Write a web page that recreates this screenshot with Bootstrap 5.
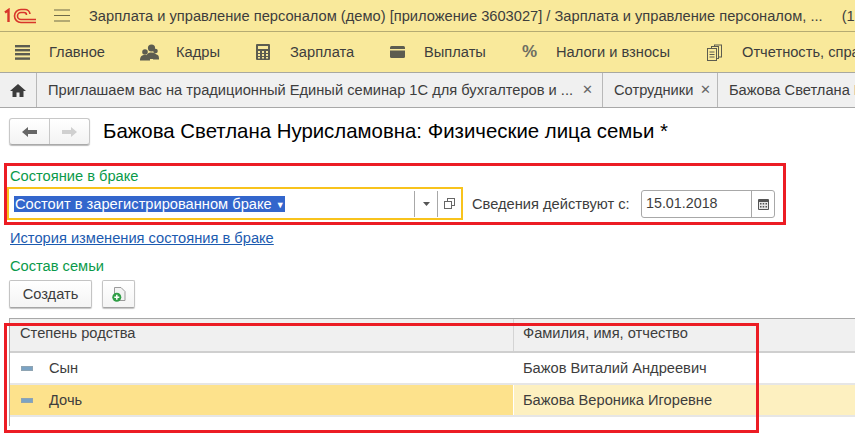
<!DOCTYPE html>
<html lang="en">
<head>
    <meta charset="UTF-8">
    <meta name="viewport" content="width=device-width, initial-scale=1.0">
    <title>Физические лица семьи</title>
    <link href="https://cdn.jsdelivr.net/npm/bootstrap@5.3.0/dist/css/bootstrap.min.css" rel="stylesheet">
    <style>
        html, body { height: 436px; overflow: hidden; }
        body { font-family: "Liberation Sans", Arial, sans-serif; font-size: 14.67px; color: #3d3d3d; background: #fff; position: relative; }
        .title-bar { height: 32px; background: #f9e99b; border-bottom: 1px solid #b5ab73; white-space: nowrap; overflow: hidden; padding-left: 4px; }
        .burger-thin { width: 16px; height: 13px; margin: 0 19px 0 17px; flex: none; }
        .sections-bar { height: 41px; background: #f9e99b; border-bottom: 1px solid #a8a8a0; white-space: nowrap; overflow: hidden; }
        .section-item { flex: none; }
        .section-item svg { display: block; flex: none; }
        .tabs-bar { height: 35px; background: #f0f0f0; border-bottom: 1px solid #a8a8a8; white-space: nowrap; overflow: hidden; }
        .tab-home { width: 37px; flex: none; border-right: 1px solid #b8b8b8; }
        .tab-cell { flex: none; border-right: 1px solid #b8b8b8; padding-left: 11px; }
        .tab-close { color: #666; font-size: 13px; }
        .nav-pair { width: 81px; height: 27px; margin-left: 9px; border: 1px solid #c8c8c8; border-bottom-color: #aaa; border-radius: 3px; background: linear-gradient(#fff, #f3f3f3); box-shadow: 0 1px 1px #bbb; flex: none; }
        .nav-pair > div { height: 100%; flex: 1; }
        .nav-pair > div + div { border-left: 1px solid #c8c8c8; }
        .page-title { font-size: 20.4px; color: #000; margin: 0 0 0 13px; font-weight: 400; line-height: 27px; }
        .head-row { padding-top: 10px; }
        .field-label { color: #0a9a4a; padding-left: 10px; line-height: 16px; }
        .marriage-row { margin-top: 3px; height: 33px; margin-left: 7px; }
        .combo-box { width: 456px; height: 33px; border: 2px solid #f8c31c; flex: none; padding: 0 1px 0 5px; }
        .combo-selected { background: #3366cc; color: #fff; line-height: 16px; height: 16px; width: 271px; white-space: nowrap; overflow: hidden; flex: none; padding-left: 1px; }
        .combo-arrow { font-size: 9px; vertical-align: 1px; }
        .combo-btn { width: 23px; height: 26px; border-left: 1px solid #a8a8a8; flex: none; }
        .date-label { margin-left: 9px; width: 169px; flex: none; }
        .date-box { width: 134px; height: 28px; border: 1px solid #a8a8a8; border-radius: 3px; flex: none; padding-left: 4px; font-size: 14.3px; }
        .date-btn { width: 23px; height: 100%; border-left: 1px solid #a8a8a8; }
        .history-link { display: block; color: #1c5bb0; padding-left: 10px; margin-top: 10px; line-height: 16px; }
        .family-label { margin-top: 12px; }
        .btn-row { margin: 6px 0 0 9px; height: 28px; }
        .one-btn { height: 28px; border: 1px solid #c4c4c4; border-bottom-color: #a5a5a5; border-radius: 2px; background: linear-gradient(#fff, #f4f4f4); box-shadow: 0 1px 1px #c4c4c4; flex: none; }
        .create-btn { width: 83px; color: #3d3d3d; }
        .add-btn { width: 33px; margin-left: 10px; }
        .kin-grid { margin: 10px 0 0 9px; height: 108px; border-left: 1px solid #a8a8a8; border-top: 1px solid #a8a8a8; }
        .kin-head { height: 34px; background: #f0f0f0; border-bottom: 2px solid #cfcfcf; }
        .kin-row { height: 32px; border-bottom: 2px solid #e6e6e6; }
        .col-kin { width: 503px; flex: none; padding-left: 10px; height: 100%; }
        .col-name { flex: 1; padding-left: 9px; height: 100%; border-left: 1px solid #d4d4d4; }
        .kin-head .col-kin, .kin-head .col-name { padding-bottom: 4px; }
        .kin-row .col-kin { padding-left: 11px; }
        .dash-mark { width: 12px; height: 5px; background: #7ba3c4; border: 1px solid #8fa4b2; margin-right: 16px; flex: none; }
        .row-current .col-kin { background: #fde28c; }
        .row-current .col-name { background: #fdf0c0; border-left: 1px solid #fff; }
        .red-frame { position: absolute; border: 3px solid #ec1c24; pointer-events: none; }
        .frame-top { left: 4px; top: 163px; width: 782px; height: 62px; }
        .frame-bottom { left: 4px; top: 323px; width: 755px; height: 110px; }
    </style>
</head>
<body>

    <div class="title-bar d-flex align-items-center">
        <svg width="33" height="16" viewBox="0 0 33 16" fill="none" stroke="#d8352a" class="flex-shrink-0">
            <path d="M1 4.500 L4.500 2 V14" stroke-width="2.400"/>
            <path d="M32 14.500 H17 A6.500 6.500 0 1 1 17 1.500 H21 A5 5 0 0 1 26 6" stroke-width="1.600"/>
            <path d="M32 11.500 H17 A3.500 3.500 0 1 1 17 4.500 H20 A2.500 2.500 0 0 1 22.500 7" stroke-width="1.600"/>
        </svg>
        <svg class="burger-thin" viewBox="0 0 16 13" stroke="#6f6a4a"><path d="M0 1H16M0 6.500H16M0 12H16" stroke-width="1.200"/></svg>
        <span>Зарплата и управление персоналом (демо) [приложение 3603027] / Зарплата и управление персоналом, ...</span>
        <span style="margin-left:19px">(1С:Предприятие)</span>
    </div>

    <div class="sections-bar d-flex align-items-center">
        <div class="section-item d-flex align-items-center" style="margin-left:15px;width:125px">
            <svg width="15" height="15" viewBox="0 0 15 15" fill="#5c5c50"><rect width="15" height="2.400" y="0"/><rect width="15" height="2.400" y="4"/><rect width="15" height="2.400" y="8"/><rect width="15" height="2.400" y="12.400"/></svg>
            <span style="margin-left:19px">Главное</span>
        </div>
        <div class="section-item d-flex align-items-center" style="width:116px">
            <svg width="19" height="17" viewBox="0 0 19 17" fill="#5c5c50"><circle cx="11.500" cy="4" r="3.600"/><path d="M6 15c0-5 2-6.500 5.500-6.500S17 10 17 13v2z"/><circle cx="5" cy="8" r="2.800"/><path d="M0 16.500c0-4 1.500-5.500 5-5.500s5 1.500 5 5.500z"/><circle cx="15.500" cy="7" r="2.300"/><path d="M13 15.500c0-3 1-5 3-5s3 1.500 3 4v1z"/></svg>
            <span style="margin-left:17px">Кадры</span>
        </div>
        <div class="section-item d-flex align-items-center" style="width:134px">
            <svg width="14" height="16" viewBox="0 0 14 16"><rect width="14" height="16" rx="1" fill="#5c5c50"/><rect x="2" y="2" width="10" height="3" fill="#f9e99b"/><g fill="#f9e99b"><rect x="2" y="7" width="2" height="2"/><rect x="6" y="7" width="2" height="2"/><rect x="10" y="7" width="2" height="2"/><rect x="2" y="10" width="2" height="2"/><rect x="6" y="10" width="2" height="2"/><rect x="10" y="10" width="2" height="2"/><rect x="2" y="13" width="2" height="1.500"/><rect x="6" y="13" width="2" height="1.500"/><rect x="10" y="13" width="2" height="1.500"/></g></svg>
            <span style="margin-left:20px">Зарплата</span>
        </div>
        <div class="section-item d-flex align-items-center" style="width:132px">
            <svg width="15" height="12" viewBox="0 0 15 12"><rect width="15" height="12" rx="1.500" fill="#5c5c50"/><rect x="0" y="3" width="15" height="1.500" fill="#f9e99b"/></svg>
            <span style="margin-left:19px">Выплаты</span>
        </div>
        <div class="section-item d-flex align-items-center" style="width:185px">
            <b style="font-size:17px;color:#6e6e62;width:17px">%</b>
            <span style="margin-left:17px">Налоги и взносы</span>
        </div>
        <div class="section-item d-flex align-items-center">
            <svg width="15" height="17" viewBox="0 0 15 17" fill="#f9e99b" stroke="#5c5c50"><rect x="7.500" y="1" width="7" height="12"/><rect x="4.500" y="2.500" width="7" height="12"/><rect x="0.500" y="4.500" width="9" height="12"/><path d="M2.500 8h5M2.500 10.500h5M2.500 13h5"/></svg>
            <span style="margin-left:20px">Отчетность, справки</span>
        </div>
    </div>

    <div class="tabs-bar d-flex">
        <div class="tab-home d-flex align-items-center justify-content-center">
            <svg width="16" height="13" viewBox="0 0 16 13" fill="#3c3c3c"><path d="M8 0 L16 7 H13.500 V13 H9.500 V8.500 H6.500 V13 H2.500 V7 H0 Z"/></svg>
        </div>
        <div class="tab-cell d-flex align-items-center" style="width:566px">
            <span>Приглашаем вас на традиционный Единый семинар 1С для бухгалтеров и ...</span>
            <span class="tab-close ms-auto" style="margin-right:9px">&#x2715;</span>
        </div>
        <div class="tab-cell d-flex align-items-center" style="width:115px">
            <span>Сотрудники</span>
            <span class="tab-close ms-auto" style="margin-right:6px">&#x2715;</span>
        </div>
        <div class="tab-cell d-flex align-items-center">
            <span>Бажова Светлана Нурисламовна</span>
        </div>
    </div>

    <div class="head-row d-flex align-items-center">
        <div class="nav-pair d-flex">
            <div class="d-flex align-items-center justify-content-center">
                <svg width="15" height="10" viewBox="0 0 15 10" fill="#666"><path d="M0 5 L6 0 V3 H15 V7 H6 V10 Z"/></svg>
            </div>
            <div class="d-flex align-items-center justify-content-center">
                <svg width="15" height="10" viewBox="0 0 15 10" fill="#d0d0d0"><path d="M15 5 L9 0 V3 H0 V7 H9 V10 Z"/></svg>
            </div>
        </div>
        <h1 class="page-title">Бажова Светлана Нурисламовна: Физические лица семьи *</h1>
    </div>

    <div class="field-label" style="margin-top:23px">Состояние в браке</div>

    <div class="marriage-row d-flex align-items-center">
        <div class="combo-box d-flex align-items-center">
            <div class="combo-selected">Состоит в зарегистрированном браке <span class="combo-arrow">&#9660;</span></div>
            <div class="combo-btn d-flex align-items-center justify-content-center ms-auto">
                <svg width="7" height="4" viewBox="0 0 7 4" fill="#555"><path d="M0 0H7L3.500 4Z"/></svg>
            </div>
            <div class="combo-btn d-flex align-items-center justify-content-center">
                <svg width="11" height="11" viewBox="0 0 11 11" fill="#fff" stroke="#666"><rect x="3.500" y="0.500" width="7" height="7"/><rect x="0.500" y="3.500" width="7" height="7"/></svg>
            </div>
        </div>
        <div class="date-label">Сведения действуют с:</div>
        <div class="date-box d-flex align-items-center justify-content-between">
            <span>15.01.2018</span>
            <div class="date-btn d-flex align-items-center justify-content-center">
                <svg width="11" height="12" viewBox="0 0 11 12" fill="#555"><rect y="1" width="11" height="11" rx="1"/><rect x="1" y="4" width="9" height="7" fill="#e8e8e8"/><g fill="#555"><rect x="2" y="5" width="1.500" height="1.500"/><rect x="4.700" y="5" width="1.500" height="1.500"/><rect x="7.500" y="5" width="1.500" height="1.500"/><rect x="2" y="8" width="1.500" height="1.500"/><rect x="4.700" y="8" width="1.500" height="1.500"/><rect x="7.500" y="8" width="1.500" height="1.500"/></g></svg>
            </div>
        </div>
    </div>

    <a href="#" class="history-link">История изменения состояния в браке</a>
    <div class="field-label family-label">Состав семьи</div>

    <div class="btn-row d-flex">
        <div class="one-btn create-btn d-flex align-items-center justify-content-center">Создать</div>
        <div class="one-btn add-btn d-flex align-items-center justify-content-center">
            <svg width="14" height="15" viewBox="0 0 14 15"><path d="M2.500 .500H9L13 4.500V13.500H2.500Z" fill="#f2f2f2" stroke="#9a9a9a"/><circle cx="4.800" cy="10.200" r="4.500" fill="#2f9e46"/><path d="M4.800 7.700V12.700M2.300 10.200H7.300" stroke="#fff" stroke-width="1.500"/></svg>
        </div>
    </div>

    <div class="kin-grid">
        <div class="kin-head d-flex">
            <div class="col-kin d-flex align-items-center">Степень родства</div>
            <div class="col-name d-flex align-items-center">Фамилия, имя, отчество</div>
        </div>
        <div class="kin-row d-flex">
            <div class="col-kin d-flex align-items-center"><span class="dash-mark"></span>Сын</div>
            <div class="col-name d-flex align-items-center" style="border-left-color:#fff">Бажов Виталий Андреевич</div>
        </div>
        <div class="kin-row row-current d-flex">
            <div class="col-kin d-flex align-items-center"><span class="dash-mark"></span>Дочь</div>
            <div class="col-name d-flex align-items-center">Бажова Вероника Игоревне</div>
        </div>
    </div>

    <div class="red-frame frame-top"></div>
    <div class="red-frame frame-bottom"></div>

    <script src="https://cdn.jsdelivr.net/npm/bootstrap@5.3.0/dist/js/bootstrap.bundle.min.js"></script>
</body>
</html>
